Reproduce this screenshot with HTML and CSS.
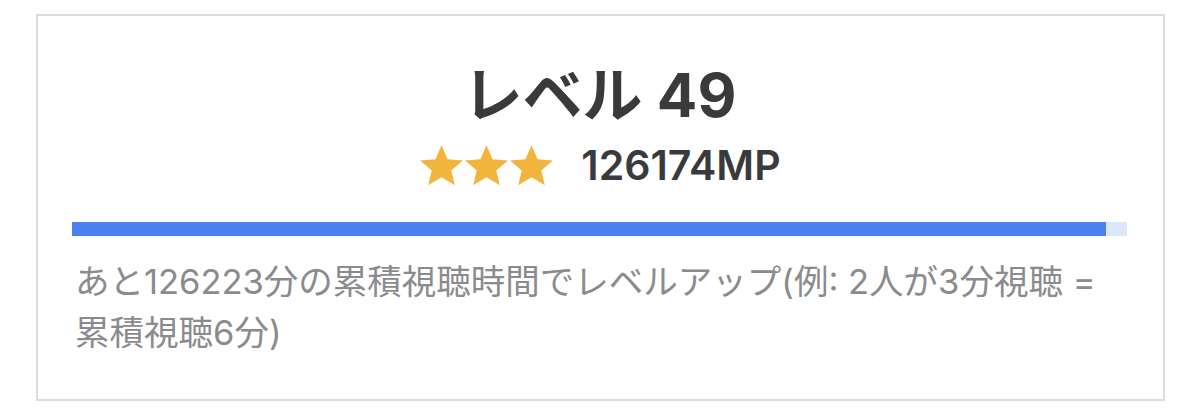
FILE: index.html
```html
<!DOCTYPE html>
<html lang="ja">
<head>
  <meta charset="UTF-8">
  <title>レベル</title>
  <link rel="stylesheet" href="styles.css">
</head>
<body>

<section class="level-card">
  <h1 class="level-title">レベル 49</h1>
  <div class="level-points">
    <div class="stars">
      <svg viewBox="0 0 24 24"><path d="M12 1.6l3.1 7.2 7.8.6-5.9 5.1 1.8 7.6L12 18l-6.8 4.1 1.8-7.6-5.9-5.1 7.8-.6z"/></svg>
      <svg viewBox="0 0 24 24"><path d="M12 1.6l3.1 7.2 7.8.6-5.9 5.1 1.8 7.6L12 18l-6.8 4.1 1.8-7.6-5.9-5.1 7.8-.6z"/></svg>
      <svg viewBox="0 0 24 24"><path d="M12 1.6l3.1 7.2 7.8.6-5.9 5.1 1.8 7.6L12 18l-6.8 4.1 1.8-7.6-5.9-5.1 7.8-.6z"/></svg>
    </div>
    <span class="mp">126174MP</span>
  </div>
  <div class="progress">
    <div class="progress-fill" style="width: 98%"></div>
  </div>
  <p class="level-note">あと126223分の累積視聴時間でレベルアップ(例: 2人が3分視聴 = 累積視聴6分)</p>
</section>

</body>
</html>
```

FILE: styles.css
```css
/* General Styles */
body {
  margin: 0;
  padding: 14px 35px 0 36px;
  font-family: Inter, "Noto Sans CJK JP", sans-serif;
  background-color: #fff;
  color: #3a3a3c;
}
.level-card {
  border: 2px solid #dcdcdc;
  box-sizing: border-box;
  height: 387px;
  padding: 0 36px 0 34px;
  display: flex;
  flex-direction: column;
  align-items: center;
}
.level-title {
  margin: 49px 0 0;
  font-size: 60px;
  line-height: 1;
  font-weight: 700;
}
.level-points {
  display: flex;
  align-items: center;
  gap: 28px;
  margin-top: 17px;
}
.stars {
  display: flex;
}
.stars svg {
  width: 47px;
  height: 47px;
  margin-right: -2px;
  fill: #f2b43d;
}
.mp {
  font-size: 41px;
  font-weight: 600;
  line-height: 1;
}
.progress {
  align-self: stretch;
  height: 14px;
  margin-top: 33px;
  background-color: #dde7fb;
}
.progress-fill {
  height: 100%;
  background-color: #4a81f1;
}
.level-note {
  align-self: stretch;
  margin: 20px 0 0 3px;
  font-size: 34.5px;
  line-height: 51px;
  color: #8b8b8e;
}
```
